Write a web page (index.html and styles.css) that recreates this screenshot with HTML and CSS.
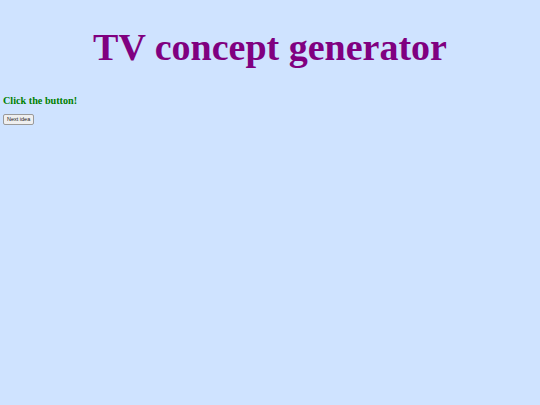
FILE: index.html
```html
<!DOCTYPE html>
<html lang="en">
<head>
    <meta charset="UTF-8">
    <title>TV concept generator</title>
    <link rel="stylesheet" href="styles.css">
</head>
<body>
    <h1>TV concept generator</h1>
    <h3 id="idea">Click the button!</h3>
    <button id="nextButton">Next idea</button>
</body>
</html>
```
FILE: styles.css
```css
body {
    font-family: "Liberation Serif", serif;
    margin: 3px;
    background: #cfe3ff;
}
h1 {
    color: #800080;
    text-align: center;
    font-size: 38px;
    margin: 22px 0 26px;
}
h3 {
    color: #008000;
    font-size: 10.2px;
    margin: 0 0 1px;
}
button {
    font-family: "Liberation Sans", sans-serif;
    font-size: 5.5px;
    line-height: 1.2;
    padding: 1px 3px;
    color: #222;
    background: #efefef;
    border: 1px solid #9a9a9a;
    border-radius: 2px;
    cursor: pointer;
}
```
